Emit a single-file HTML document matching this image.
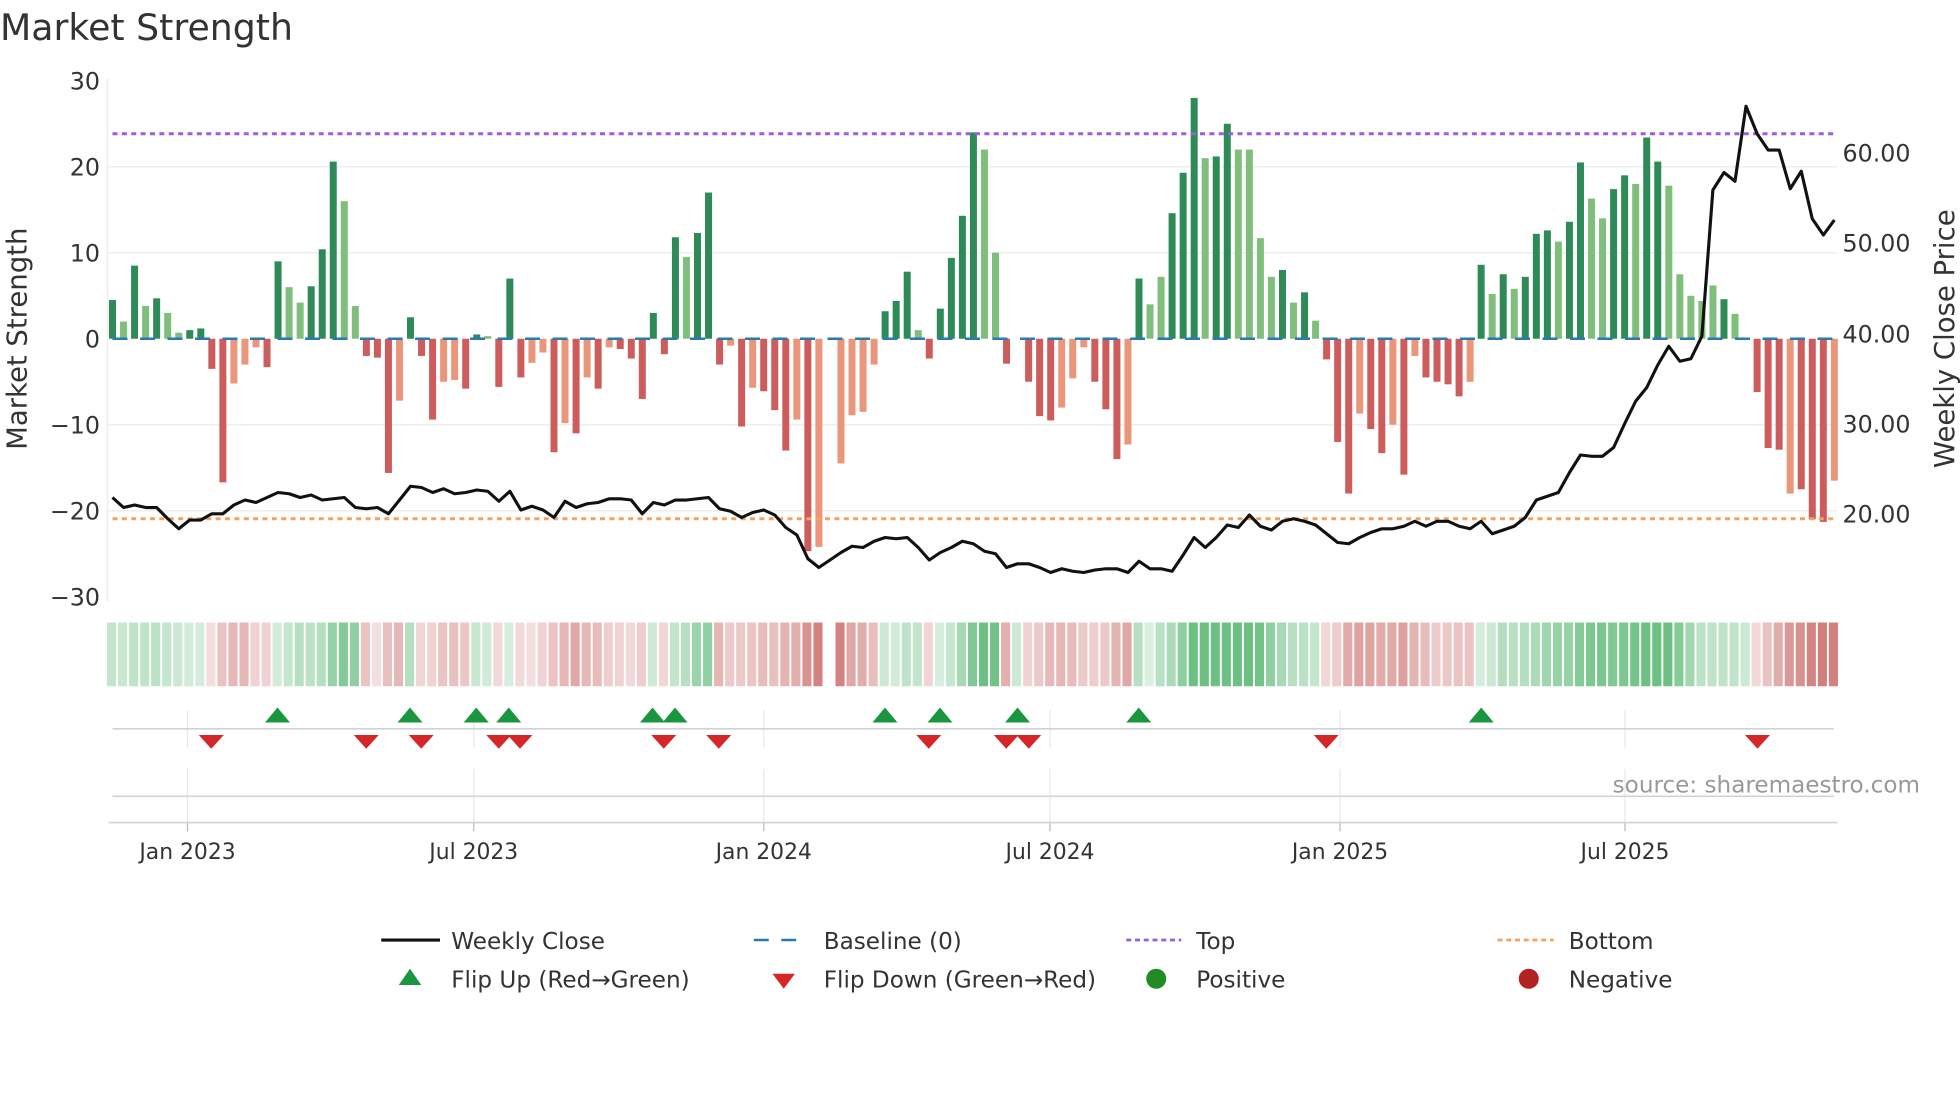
<!DOCTYPE html>
<html><head><meta charset="utf-8">
<style>
html,body{margin:0;padding:0;background:#fff;width:1960px;height:1102px;overflow:hidden}
svg{display:block}
text{font-family:"DejaVu Sans","Liberation Sans",sans-serif;fill:#333}
</style></head>
<body>
<svg id="s" width="1960" height="1102" viewBox="0 0 1568 881.6" xmlns="http://www.w3.org/2000/svg">
<rect width="1568" height="881.6" fill="#fff"/>
<text x="0" y="32" font-size="29">Market Strength</text>
<g id="grid"></g>
<g id="bars"></g>
<g id="ov"></g>
<text transform="translate(21,271) rotate(-90)" font-size="22" text-anchor="middle">Market Strength</text>
<text transform="translate(1563,271) rotate(-90)" font-size="22" text-anchor="middle">Weekly Close Price</text>
<text x="1536" y="634" font-size="18.5" text-anchor="end" style="fill:#999">source: sharemaestro.com</text>
<g font-size="18.5">
<line x1="305" y1="752" x2="352" y2="752" stroke="#111" stroke-width="2.5"/>
<text x="361" y="759">Weekly Close</text>
<line x1="603" y1="752" x2="645" y2="752" stroke="#2a7ab0" stroke-width="2" stroke-dasharray="12,10"/>
<text x="659" y="759">Baseline (0)</text>
<line x1="901" y1="752" x2="945" y2="752" stroke="#9b5de5" stroke-width="2.2" stroke-dasharray="4,3"/>
<text x="957" y="759">Top</text>
<line x1="1198" y1="752" x2="1243" y2="752" stroke="#f4a261" stroke-width="2.2" stroke-dasharray="4,3"/>
<text x="1255" y="759">Bottom</text>
<polygon points="319,788 337,788 328,775" fill="#1a9641"/>
<text x="361" y="790">Flip Up (Red→Green)</text>
<polygon points="618,779 636,779 627,791" fill="#d62728"/>
<text x="659" y="790">Flip Down (Green→Red)</text>
<circle cx="925" cy="783" r="8" fill="#228b22"/>
<text x="957" y="790">Positive</text>
<circle cx="1223" cy="783" r="8" fill="#b22222"/>
<text x="1255" y="790">Negative</text>
</g>
</svg>
<script>
var NS="http://www.w3.org/2000/svg";
function el(p,t,a,txt){var e=document.createElementNS(NS,t);for(var k in a)e.setAttribute(k,a[k]);if(txt!=null)e.textContent=txt;p.appendChild(e);return e;}
var V=[4.5,2,8.5,3.8,4.7,3,0.7,1,1.2,-3.5,-16.7,-5.2,-3,-1,-3.3,9,6,4.2,6.1,10.4,20.6,16,3.8,-2,-2.2,-15.6,-7.2,2.5,-2,-9.4,-5,-4.8,-5.8,0.5,0.3,-5.6,7,-4.5,-2.8,-1.6,-13.2,-9.8,-11,-4.5,-5.8,-1,-1.2,-2.3,-7,3,-1.8,11.8,9.5,12.3,17,-3,-0.8,-10.2,-5.7,-6.1,-8.3,-13,-9.4,-24.7,-24.2,null,-14.5,-8.9,-8.5,-3,3.2,4.4,7.8,1,-2.3,3.5,9.4,14.3,24,22,10,-2.9,0,-5,-9,-9.5,-8,-4.6,-1,-5,-8.2,-14,-12.3,7,4,7.2,14.6,19.3,28,21,21.2,25,22,22,11.7,7.2,8,4.2,5.4,2.1,-2.4,-12,-18,-8.7,-10.5,-13.3,-10,-15.8,-2,-4.5,-5,-5.3,-6.7,-5,8.6,5.2,7.5,5.8,7.2,12.2,12.6,11.3,13.6,20.5,16.3,14,17.4,19,18,23.4,20.6,17.8,7.5,5,4.4,6.2,4.6,2.9,0,-6.2,-12.7,-12.9,-18,-17.5,-21,-21.3,-16.5];
var light={1:1,3:1,5:1,6:1,16:1,17:1,21:1,22:1,34:1,52:1,73:1,79:1,80:1,94:1,95:1,99:1,102:1,103:1,104:1,105:1,107:1,109:1,125:1,127:1,131:1,134:1,135:1,138:1,141:1,142:1,143:1,144:1,145:1,147:1,148:1,
11:1,12:1,13:1,26:1,30:1,31:1,38:1,39:1,41:1,43:1,45:1,56:1,58:1,62:1,64:1,66:1,67:1,68:1,69:1,86:1,87:1,88:1,92:1,113:1,116:1,118:1,123:1,152:1,156:1};
var P=[398,406,404,406,406,415,423,416,416,411,411,404,400,402,398,394,395,398,396,400,399,398,406,407,406,411,400,389,390,394,391,395,394,392,393,401,393,408,405,408,414,401,406,403,402,399,399,400,411,402,404,400,400,399,398,407,409,414,410,408,412,422,428,447,454,448,442,437,438,433,430,431,430,438,448,442,438,433,435,441,443,454,451,451,454,458,455,457,458,456,455,455,458,449,455,455,457,444,430,438,430,420,422,412,421,424,417,415,417,420,427,434,435,430,426,423,423,421,417,421,417,417,421,423,417,427,424,421,414,400,397,394,378,364,365,365,358,339,321,310,292,277,289,287,269,152,138,145,85,107,120,120,151,137,175,188,176];
var g=document.getElementById('grid'),b=document.getElementById('bars'),o=document.getElementById('ov');
var Z=271,U=6.88,X0=90,DX=8.83;
[30,20,10,0,-10,-20,-30].forEach(function(v){var y=Z-v*U;if(v!=0&&Math.abs(v)<30)el(g,'line',{x1:87,x2:1470,y1:y,y2:y,stroke:'#eeeeee','stroke-width':1.2});
el(g,'text',{x:80,y:y+7,'font-size':19,'text-anchor':'end'},(v<0?'\u2212':'')+Math.abs(v));});
el(g,'line',{x1:86,x2:86,y1:62,y2:482,stroke:'#eeeeee','stroke-width':1.2});
[[60,122],[50,194],[40,267],[30,339],[20,411]].forEach(function(a){el(g,'text',{x:1474,y:a[1]+7,'font-size':19},a[0].toFixed(2));});
V.forEach(function(v,i){if(v==null||v==0)return;var x=X0+i*DX;var c=v>0?(light[i]?'#7fbf7b':'#2e8b57'):(light[i]?'#e9967a':'#cd5c5c');
var y1=v>0?Z-v*U:Z;el(b,'rect',{x:x-2.8,y:y1,width:5.6,height:Math.abs(v)*U,fill:c});});
el(o,'line',{x1:88,x2:1470,y1:271,y2:271,stroke:'#2a7ab0','stroke-width':2,'stroke-dasharray':'12,10','stroke-dashoffset':'-2'});
el(o,'line',{x1:90,x2:1470,y1:107,y2:107,stroke:'#9b5de5','stroke-width':2.4,'stroke-dasharray':'4,3.5'});
el(o,'line',{x1:90,x2:1470,y1:415,y2:415,stroke:'#f4a261','stroke-width':2.4,'stroke-dasharray':'4,3.5'});
var pts=P.map(function(y,i){return (X0+i*DX).toFixed(1)+','+y;}).join(' ');
el(o,'polyline',{points:pts,fill:'none',stroke:'#111','stroke-width':2.5,'stroke-linejoin':'round'});
for(var i=0;i<V.length;i++){if(V[i]==null)continue;var s=0,n=0;for(var k=Math.max(0,i-2);k<=i;k++){if(V[k]!=null){s+=V[k];n++;}}var m=s/n;
var sign=V[i]>0?1:(V[i]<0?-1:(m>=0?1:-1));var a=0.18+0.55*Math.min(1,Math.abs(m)/20);
el(o,'rect',{x:X0+i*DX-4.4,y:498,width:7.3,height:51,fill:sign>0?'#34a853':'#c0504d','fill-opacity':a.toFixed(2)});}
[150,379,611,840,1072,1300].forEach(function(x){el(o,'line',{x1:x,x2:x,y1:568,y2:598,stroke:'#e6e8ee','stroke-width':1});el(o,'line',{x1:x,x2:x,y1:615,y2:658,stroke:'#e6e8ee','stroke-width':1});el(o,'line',{x1:x,x2:x,y1:658,y2:665,stroke:'#bbb','stroke-width':1});});
el(o,'line',{x1:90,x2:1467,y1:583,y2:583,stroke:'#d0d2d8','stroke-width':1.3});
el(o,'line',{x1:90,x2:1467,y1:637,y2:637,stroke:'#d0d2d8','stroke-width':1.3});
el(o,'line',{x1:87,x2:1470,y1:658,y2:658,stroke:'#d0d2d8','stroke-width':1.3});
[222,328,381,407,522,540,708,752,814,911,1185].forEach(function(x){el(o,'polygon',{points:(x-10)+',578 '+(x+10)+',578 '+x+',566',fill:'#1a9641'});});
[169,293,337,399,416,531,575,743,805,823,1061,1406].forEach(function(x){el(o,'polygon',{points:(x-10)+',588 '+(x+10)+',588 '+x+',599',fill:'#d62728'});});
[['Jan 2023',150],['Jul 2023',379],['Jan 2024',611],['Jul 2024',840],['Jan 2025',1072],['Jul 2025',1300]].forEach(function(a){el(o,'text',{x:a[1],y:687,'font-size':17.5,'text-anchor':'middle'},a[0]);});
</script>
</body></html>
